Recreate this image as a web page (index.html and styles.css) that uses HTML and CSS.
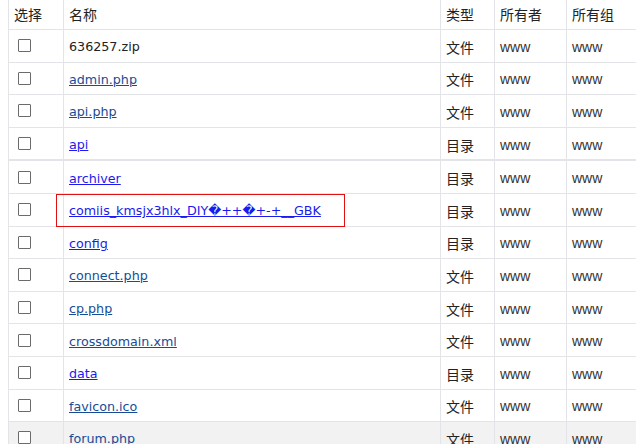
FILE: index.html
```html
<!DOCTYPE html>
<html lang="zh">
<head>
<meta charset="utf-8">
<link rel="stylesheet" href="styles.css">
</head>
<body>
<table class="files">
  <thead>
    <tr><th class="c-sel">选择</th><th class="c-name">名称</th><th class="c-type">类型</th><th class="c-own">所有者</th><th class="c-grp">所有组</th></tr>
  </thead>
  <tbody>
    <tr><td><span class="cb"></span></td><td class="name plain">636257.zip</td><td class="t">文件</td><td class="w">www</td><td class="w">www</td></tr>
    <tr><td><span class="cb"></span></td><td class="name"><a class="file" href="#">admin.php</a></td><td class="t">文件</td><td class="w">www</td><td class="w">www</td></tr>
    <tr><td><span class="cb"></span></td><td class="name"><a class="file" href="#">api.php</a></td><td class="t">文件</td><td class="w">www</td><td class="w">www</td></tr>
    <tr><td><span class="cb"></span></td><td class="name"><a class="dir" href="#">api</a></td><td class="t">目录</td><td class="w">www</td><td class="w">www</td></tr>
    <tr class="thick"><td><span class="cb"></span></td><td class="name"><a class="dir" href="#">archiver</a></td><td class="t">目录</td><td class="w">www</td><td class="w">www</td></tr>
    <tr><td><span class="cb"></span></td><td class="name mark"><a class="dir" href="#">comiis_kmsjx3hlx_DIY�++�+-+__GBK</a><span class="redbox"></span></td><td class="t">目录</td><td class="w">www</td><td class="w">www</td></tr>
    <tr><td><span class="cb"></span></td><td class="name"><a class="dir" href="#">config</a></td><td class="t">目录</td><td class="w">www</td><td class="w">www</td></tr>
    <tr><td><span class="cb"></span></td><td class="name"><a class="file" href="#">connect.php</a></td><td class="t">文件</td><td class="w">www</td><td class="w">www</td></tr>
    <tr><td><span class="cb"></span></td><td class="name"><a class="file" href="#">cp.php</a></td><td class="t">文件</td><td class="w">www</td><td class="w">www</td></tr>
    <tr><td><span class="cb"></span></td><td class="name"><a class="file" href="#">crossdomain.xml</a></td><td class="t">文件</td><td class="w">www</td><td class="w">www</td></tr>
    <tr><td><span class="cb"></span></td><td class="name"><a class="dir" href="#">data</a></td><td class="t">目录</td><td class="w">www</td><td class="w">www</td></tr>
    <tr><td><span class="cb"></span></td><td class="name"><a class="file" href="#">favicon.ico</a></td><td class="t">文件</td><td class="w">www</td><td class="w">www</td></tr>
    <tr class="hover"><td><span class="cb"></span></td><td class="name"><a class="file" href="#">forum.php</a></td><td class="t">文件</td><td class="w">www</td><td class="w">www</td></tr>
  </tbody>
</table>
</body>
</html>
```

FILE: styles.css
```css
html, body {
  margin: 0;
  padding: 0;
  background: #fff;
  overflow: hidden;
}
body {
  padding: 0 0 0 8px;
  font-family: "Liberation Sans", "Noto Sans CJK SC", sans-serif;
  font-size: 14px;
  color: #222;
}
.files {
  border-collapse: collapse;
  table-layout: fixed;
  width: 654px;
  margin-top: -1px;
}
.files th, .files td {
  border: 1px solid #e3e4e8;
  padding: 0 5px;
  text-align: left;
  vertical-align: middle;
  font-weight: normal;
  white-space: nowrap;
}
.files th {
  height: 28px;
  padding-bottom: 1px;
  color: #222;
  font-family: "Noto Sans CJK SC", sans-serif;
  font-size: 14px;
}
.files td {
  height: 29.6px;
  padding-top: 2px;
}
.c-sel { width: 44px; }
.c-name { width: 366px; }
.c-type { width: 43px; }
.c-own { width: 61px; }
.c-grp { width: 90px; }
.t {
  font-family: "Noto Sans CJK SC", sans-serif;
  font-size: 14px;
  color: #222;
}
.w {
  font-family: "Liberation Sans", sans-serif;
  font-size: 14px;
  color: #333;
}
.cb {
  display: block;
  width: 11px;
  height: 11px;
  border: 1px solid #6b6b6b;
  border-radius: 1px;
  background: #fff;
  margin-left: 4px;
  margin-top: -2px;
}
.name {
  font-family: "DejaVu Sans", sans-serif;
  font-size: 12.7px;
}
.plain { color: #222; }
.name a { text-decoration: underline; }
.file { color: #164c96; }
.dir { color: #1a1aee; }
.thick td { border-top: 2px solid #e3e4e8; }
.hover td { background: #f2f2f2; }
.mark { position: relative; }
.redbox {
  position: absolute;
  left: -8px;
  top: 0;
  width: 287px;
  height: 31px;
  border: 1px solid #e01010;
}
```
